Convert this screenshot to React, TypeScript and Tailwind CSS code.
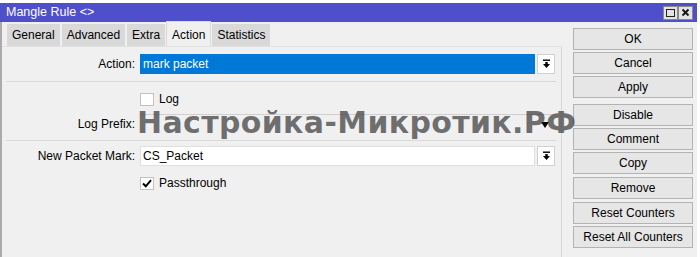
import React from "react";

const DropIcon = () => (
  <svg width="9" height="10" viewBox="0 0 9 10">
    <rect x="1" y="0.5" width="7" height="1.4" fill="#000" />
    <path d="M3.3 3 H5.7 V5 H8 L4.5 9 L1 5 H3.3 Z" fill="#000" />
  </svg>
);

const Tab = ({ label, active }: { label: string; active?: boolean }) =>
  active ? (
    <div className="h-[25px] px-[5px] -mx-[1px] flex items-start pt-[4px] bg-[#f0f0f0] border-x border-t border-[#d9d9d9]">
      {label}
    </div>
  ) : (
    <div className="h-[22px] px-[5px] flex items-center bg-[#d9d9d9]">{label}</div>
  );

const Btn = ({ label, className = "" }: { label: string; className?: string }) => (
  <div
    className={`h-[22px] w-[120px] flex items-center justify-center bg-[#e6e6e6] border border-[#b3b3b3] text-[12px] text-black ${className}`}
  >
    {label}
  </div>
);

const Check = ({ checked }: { checked?: boolean }) => (
  <div className="w-[14px] h-[13px] bg-white border border-[#c2c2c2] flex items-center justify-center">
    {checked && (
      <svg width="10" height="9" viewBox="0 0 10 9">
        <path d="M1 4.5 L3.8 7.3 L9 1.2" stroke="#000" strokeWidth="2" fill="none" />
      </svg>
    )}
  </div>
);

export default function App() {
  return (
    <div className="relative w-[700px] h-[257px] bg-white overflow-hidden font-['Liberation_Sans',Arial,sans-serif] text-[12px] text-black">
      <div className="h-[3px] bg-white" />
      <div className="flex flex-col w-[697px] h-[254px]">
        {/* title bar */}
        <div className="h-[19px] bg-[#4f4fcb] flex items-center justify-between pl-[6px] pr-[4px]">
          <span className="text-white text-[12.5px] leading-none">Mangle Rule &lt;&gt;</span>
          <div className="flex">
            <div className="w-[15px] h-[14px] bg-[#e3e3e3] border border-[#8a8a8a] flex items-center justify-center">
              <div className="w-[9px] h-[8px] border border-[#222]" />
            </div>
            <div className="w-[15px] h-[14px] bg-[#e3e3e3] border border-[#8a8a8a] flex items-center justify-center">
              <svg width="9" height="9" viewBox="0 0 9 9">
                <path d="M1.5 1.5 L7.5 7.5 M7.5 1.5 L1.5 7.5" stroke="#111" strokeWidth="1.8" />
              </svg>
            </div>
          </div>
        </div>
        {/* body */}
        <div className="flex-1 flex bg-[#f0f0f0] border-l-2 border-[#ababab]">
          {/* left panel */}
          <div className="w-[560px] flex flex-col">
            <div className="h-[25px] flex items-end gap-[2px] pl-[5px] border-b border-[#e2e2e2]">
              <Tab label="General" />
              <Tab label="Advanced" />
              <Tab label="Extra" />
              <Tab label="Action" active />
              <Tab label="Statistics" />
            </div>
            <div className="flex-1 flex flex-col border-r border-[#d6d6d6] pl-[4px] pr-[5px]">
              {/* Action */}
              <div className="mt-[7px] h-[20px] flex items-center">
                <div className="w-[129px] text-right">Action:</div>
                <div className="ml-[5px] w-[395px] h-[20px] bg-[#0078d7] text-white flex items-center pl-[3px]">
                  mark packet
                </div>
                <div className="ml-[2px] w-[18px] h-[20px] bg-white border border-[#d0d0d0] flex items-center justify-center">
                  <DropIcon />
                </div>
              </div>
              <div className="mt-[7px] h-px bg-[#d8d8d8]" />
              {/* Log */}
              <div className="mt-[10px] h-[14px] flex items-center pl-[134px]">
                <Check />
                <span className="ml-[5px]">Log</span>
              </div>
              {/* Log Prefix */}
              <div className="mt-[8px] h-[20px] flex items-center">
                <div className="w-[129px] text-right">Log Prefix:</div>
                <div className="ml-[5px] w-[415px] h-[20px] border-t border-[#cfcfcf] flex items-center justify-end pr-[6px]">
                  <svg width="8" height="6" viewBox="0 0 8 6">
                    <path d="M0 0 H8 L4 6 Z" fill="#000" />
                  </svg>
                </div>
              </div>
              <div className="mt-[6px] h-px bg-[#d8d8d8]" />
              {/* New Packet Mark */}
              <div className="mt-[5px] h-[20px] flex items-center">
                <div className="w-[129px] text-right">New Packet Mark:</div>
                <div className="ml-[5px] w-[395px] h-[20px] bg-white border border-[#e0e0e0] flex items-center pl-[2px]">
                  CS_Packet
                </div>
                <div className="ml-[2px] w-[18px] h-[20px] bg-white border border-[#d0d0d0] flex items-center justify-center">
                  <DropIcon />
                </div>
              </div>
              {/* Passthrough */}
              <div className="mt-[10px] h-[14px] flex items-center pl-[134px]">
                <Check checked />
                <span className="ml-[5px]">Passthrough</span>
              </div>
            </div>
          </div>
          {/* buttons */}
          <div className="flex flex-col pt-[6px] pl-[11px] gap-[2px]">
            <Btn label="OK" />
            <Btn label="Cancel" />
            <Btn label="Apply" />
            <Btn label="Disable" className="mt-[4px]" />
            <Btn label="Comment" />
            <Btn label="Copy" />
            <Btn label="Remove" className="mt-[1px]" />
            <Btn label="Reset Counters" className="mt-[1px]" />
            <Btn label="Reset All Counters" />
          </div>
        </div>
      </div>
      {/* watermark */}
      <div className="absolute left-[137px] top-[108px] text-[30px] leading-[30px] font-bold tracking-[0.35px] font-['DejaVu_Sans',sans-serif] text-[rgba(60,60,60,0.72)] whitespace-nowrap pointer-events-none">
        Настройка-Микротик.РФ
      </div>
    </div>
  );
}
